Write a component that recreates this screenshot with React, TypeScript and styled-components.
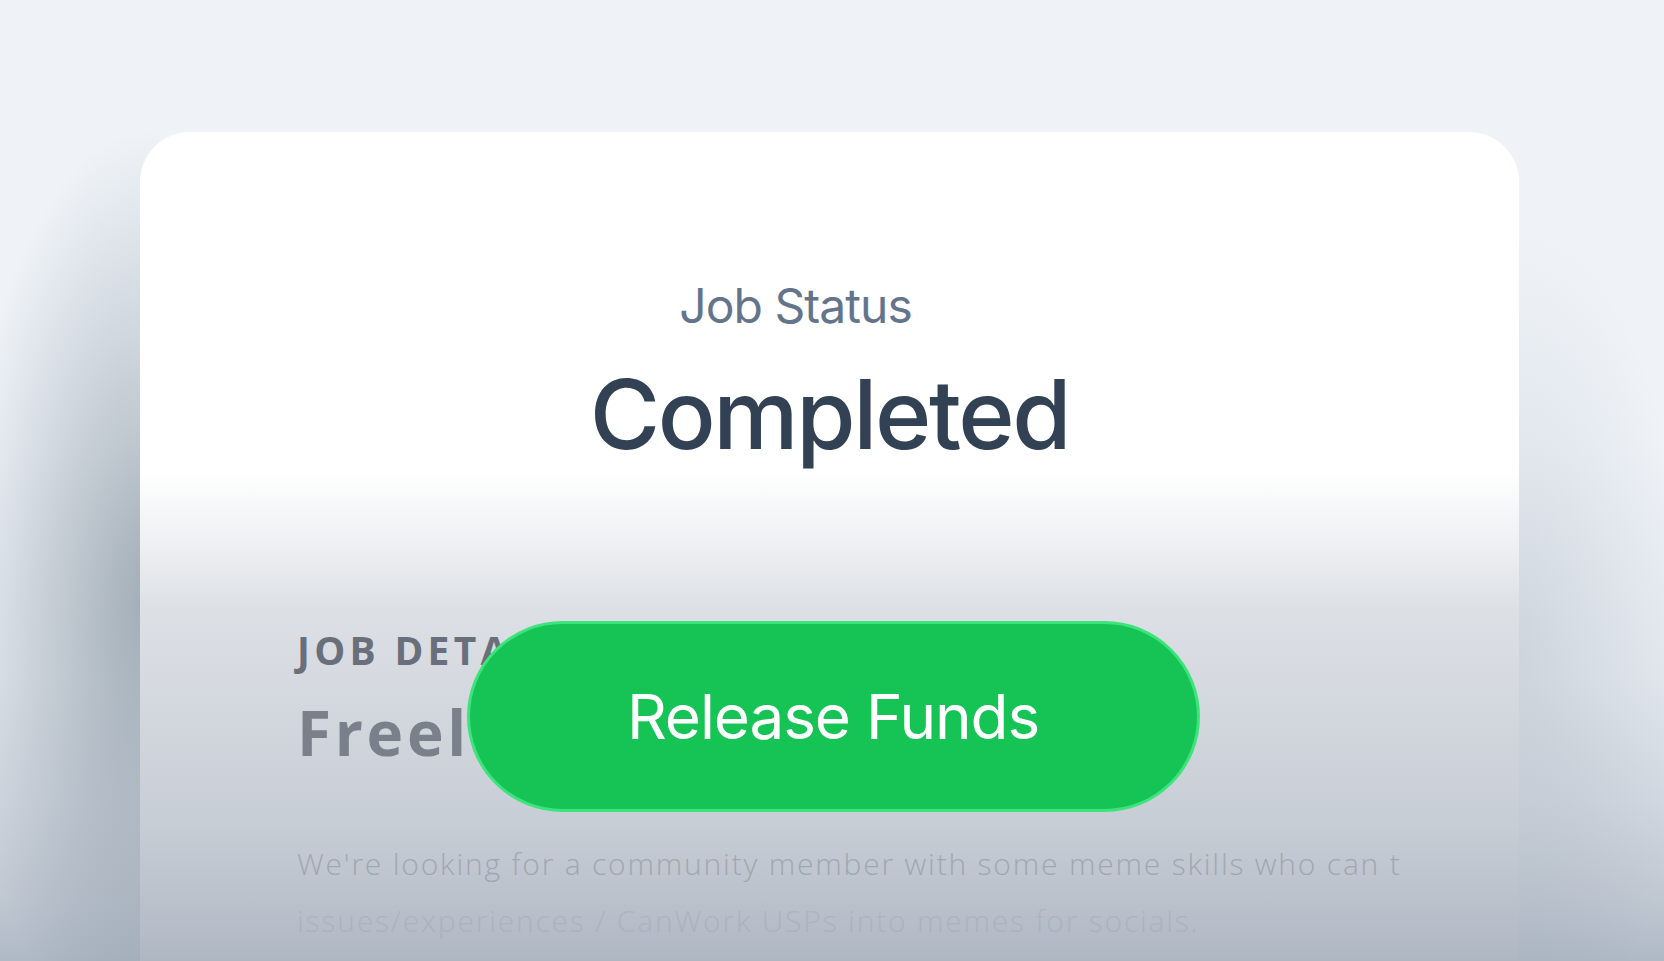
import React from "react";
import styled, { createGlobalStyle } from "styled-components";

const GlobalStyle = createGlobalStyle`
  html, body {
    margin: 0;
    padding: 0;
    height: 100%;
    overflow: hidden;
    background: #eff3f8;
  }
  body {
    font-family: Inter, "Noto Sans", sans-serif;
    -webkit-font-smoothing: antialiased;
  }
  * { box-sizing: border-box; }
`;

const Page = styled.main`
  position: relative;
  height: 961px;
  overflow: hidden;
  padding-top: 132px;
  background:
    radial-gradient(ellipse 190px 470px at 150px 600px, rgba(70, 90, 105, 0.44), rgba(70, 90, 105, 0) 100%),
    radial-gradient(ellipse 170px 420px at 1520px 650px, rgba(70, 90, 105, 0.15), rgba(70, 90, 105, 0) 100%),
    linear-gradient(180deg, #eff3f8 0px, #eff3f8 450px, #e4e9ef 680px, #d3d9e2 800px, #bfc7d1 900px, #afb9c6 961px);
`;

const Card = styled.section`
  position: relative;
  width: 1379px;
  min-height: 900px;
  margin-left: 140px;
  background: #ffffff;
  border-radius: 50px;
  display: flex;
  flex-direction: column;

  &::after {
    content: "";
    position: absolute;
    inset: 0;
    border-radius: inherit;
    pointer-events: none;
    z-index: 1;
    background: linear-gradient(
      180deg,
      rgba(100, 116, 139, 0) 0px,
      rgba(100, 116, 139, 0) 338px,
      rgba(100, 116, 139, 0.1) 408px,
      rgba(100, 116, 139, 0.22) 475px,
      rgba(100, 116, 139, 0.355) 691px,
      rgba(100, 116, 139, 0.49) 808px,
      rgba(100, 116, 139, 0.52) 829px
    );
  }
`;

const StatusBlock = styled.header`
  display: flex;
  flex-direction: column;
  align-items: center;
  padding-top: 150px;
`;

const StatusLabel = styled.span`
  font-size: 48px;
  line-height: 1;
  font-weight: 400;
  letter-spacing: -0.02em;
  color: #64748b;
  margin-right: 68px;
`;

const StatusValue = styled.h1`
  margin: 36px 0 0;
  font-size: 96px;
  line-height: 1;
  font-weight: 500;
  letter-spacing: -0.025em;
  color: #334155;
`;

const Details = styled.div`
  display: flex;
  flex-direction: column;
  margin-top: 168px;
  padding: 0 118px 0 157px;
  font-family: "Open Sans", "Noto Sans", sans-serif;
`;

const Eyebrow = styled.h3`
  margin: 0;
  font-size: 39px;
  line-height: 1;
  font-weight: 700;
  letter-spacing: 0.11em;
  color: #6b6e75;
  text-transform: uppercase;
`;

const JobTitle = styled.h2`
  margin: 32px 0 0;
  font-size: 62px;
  line-height: 1;
  font-weight: 700;
  letter-spacing: 0.06em;
  color: #84868b;
  white-space: nowrap;
`;

const Description = styled.p`
  margin: 72px 0 0;
  width: 1104px;
  overflow: hidden;
  display: flex;
  flex-direction: column;
  font-size: 30px;
  line-height: 57px;
  font-weight: 300;
  letter-spacing: 0.06em;
`;

const DescLine = styled.span<{ $fade?: boolean }>`
  white-space: nowrap;
  color: ${(p) => (p.$fade ? "#ebebed" : "#cbc9cb")};
`;

const ActionLayer = styled.div`
  position: absolute;
  top: 621px;
  left: 0;
  right: 0;
  display: flex;
  justify-content: center;
  z-index: 2;
  pointer-events: none;
`;

const ReleaseButton = styled.button`
  pointer-events: auto;
  width: 733px;
  height: 191px;
  margin-left: 2px;
  border: 3px solid #3de37b;
  border-radius: 999px;
  background: #16c455;
  color: #ffffff;
  font-family: Inter, "Noto Sans", sans-serif;
  font-size: 62px;
  font-weight: 400;
  letter-spacing: -0.018em;
  cursor: pointer;
  display: flex;
  align-items: center;
  justify-content: center;
`;

export default function App() {
  return (
    <>
      <GlobalStyle />
      <Page>
        <Card>
          <StatusBlock>
            <StatusLabel>Job Status</StatusLabel>
            <StatusValue>Completed</StatusValue>
          </StatusBlock>
          <Details>
            <Eyebrow>Job Details</Eyebrow>
            <JobTitle>Freelance Meme</JobTitle>
            <Description>
              <DescLine>We're looking for a community member with some meme skills who can turn common</DescLine>
              <DescLine $fade>issues/experiences / CanWork USPs into memes for socials.</DescLine>
            </Description>
          </Details>
        </Card>
        <ActionLayer>
          <ReleaseButton type="button">Release Funds</ReleaseButton>
        </ActionLayer>
      </Page>
    </>
  );
}
